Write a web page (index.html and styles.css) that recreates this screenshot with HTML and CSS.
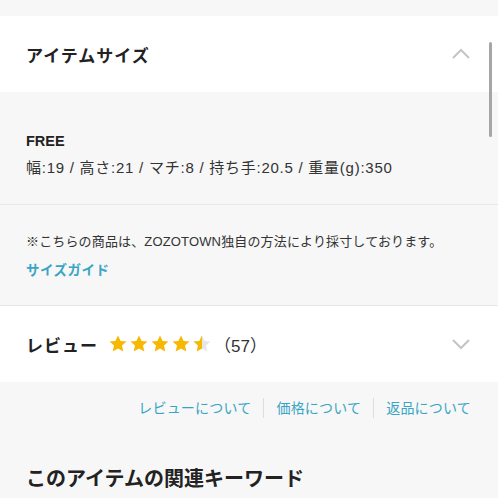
FILE: index.html
```html
<!DOCTYPE html>
<html lang="ja">

<head>
    <meta charset="UTF-8">
    <meta name="viewport" content="width=device-width, initial-scale=1.0">
    <title>アイテムサイズ</title>
    <link rel="stylesheet" href="styles.css">
</head>

<body>
    <section class="panel">
        <div class="panel-head">
            <h2 class="panel-title">アイテムサイズ</h2>
            <svg class="chevron" width="20" height="12" viewBox="0 0 20 12">
                <path d="M2 10 L10 2 L18 10" fill="none" stroke="#c4c4c4" stroke-width="2" />
            </svg>
        </div>
        <div class="size-body">
            <p class="size-name">FREE</p>
            <p class="size-detail">幅:19 / 高さ:21 / マチ:8 / 持ち手:20.5 / 重量(g):350</p>
        </div>
        <div class="size-note">
            <p>※こちらの商品は、ZOZOTOWN独自の方法により採寸しております。</p>
            <a class="link strong" href="#">サイズガイド</a>
        </div>
    </section>

    <section class="panel">
        <div class="panel-head">
            <div class="review">
                <h2 class="panel-title">レビュー</h2>
                <div class="stars">
                    <svg width="104" height="20" viewBox="0 0 104 20">
                        <defs>
                            <path id="star" d="M10 1.5 L12.6 7 L18.5 7.6 L14 11.6 L15.3 17.5 L10 14.4 L4.7 17.5 L6 11.6 L1.5 7.6 L7.4 7 Z" />
                            <clipPath id="half">
                                <rect x="0" y="0" width="10" height="20" />
                            </clipPath>
                        </defs>
                        <use href="#star" fill="#f6b800" />
                        <use href="#star" x="21" fill="#f6b800" />
                        <use href="#star" x="42" fill="#f6b800" />
                        <use href="#star" x="63" fill="#f6b800" />
                        <g transform="translate(84 0)">
                            <use href="#star" fill="#e6e6e6" />
                            <use href="#star" fill="#f6b800" clip-path="url(#half)" />
                        </g>
                    </svg>
                </div>
                <span class="count">（57）</span>
            </div>
            <svg class="chevron" width="20" height="12" viewBox="0 0 20 12">
                <path d="M2 2 L10 10 L18 2" fill="none" stroke="#c4c4c4" stroke-width="2" />
            </svg>
        </div>
    </section>

    <nav class="guides">
        <a class="link" href="#">レビューについて</a>
        <a class="link" href="#">価格について</a>
        <a class="link" href="#">返品について</a>
    </nav>

    <h2 class="keywords">このアイテムの関連キーワード</h2>

    <div class="scrollbar"></div>
</body>

</html>
```

FILE: styles.css
```css
body {
    margin: 0;
    padding-top: 16px;
    background-color: #f7f7f7;
    font-family: 'Liberation Sans', 'Noto Sans CJK JP', sans-serif;
    color: #222;
}

p,
h2 {
    margin: 0;
}

.panel-head {
    display: flex;
    align-items: center;
    justify-content: space-between;
    height: 76px;
    padding: 0 27px 0 26px;
    background-color: #fff;
}

.panel-title {
    font-size: 17px;
    font-weight: 600;
    letter-spacing: 1px;
}

.size-body {
    padding: 39px 26px 25px;
    border-bottom: 1px solid #e8e8e8;
}

.size-name {
    font-size: 14.5px;
    font-weight: 600;
    line-height: 20px;
    color: #222;
}

.size-detail {
    margin-top: 6px;
    font-size: 15px;
    line-height: 22px;
    letter-spacing: 0.75px;
    color: #333;
}

.size-note {
    padding: 27px 26px 24px;
    border-bottom: 1px solid #e8e8e8;
    font-size: 13px;
    letter-spacing: 0.15px;
    color: #333;
}

.size-note p {
    line-height: 20px;
}

.size-note .link {
    display: block;
    margin-top: 9px;
    line-height: 20px;
}

.link {
    color: #39a5c5;
    text-decoration: none;
}

.strong {
    font-weight: 600;
    font-size: 13.5px;
    letter-spacing: 0.5px;
}

.review {
    display: flex;
    align-items: center;
}

.stars {
    display: flex;
    margin-left: 10px;
}

.stars svg {
    display: block;
}

.count {
    margin-left: 2px;
    font-size: 17px;
    color: #333;
}

.guides {
    display: flex;
    justify-content: flex-end;
    padding: 16px 27px 0;
    font-size: 14px;
    line-height: 20px;
    letter-spacing: 0.2px;
}

.guides .link {
    padding: 0 12px;
    border-left: 1px solid #dedede;
}

.guides .link:first-child {
    border-left: none;
}

.guides .link:last-child {
    padding-right: 0;
}

.keywords {
    margin-top: 47px;
    padding: 0 26px;
    font-size: 20px;
    font-weight: 600;
    line-height: 28px;
}

.scrollbar {
    position: fixed;
    top: 42px;
    right: 6px;
    width: 3px;
    height: 95px;
    border-radius: 2px;
    background-color: #a6a6a6;
}
```
